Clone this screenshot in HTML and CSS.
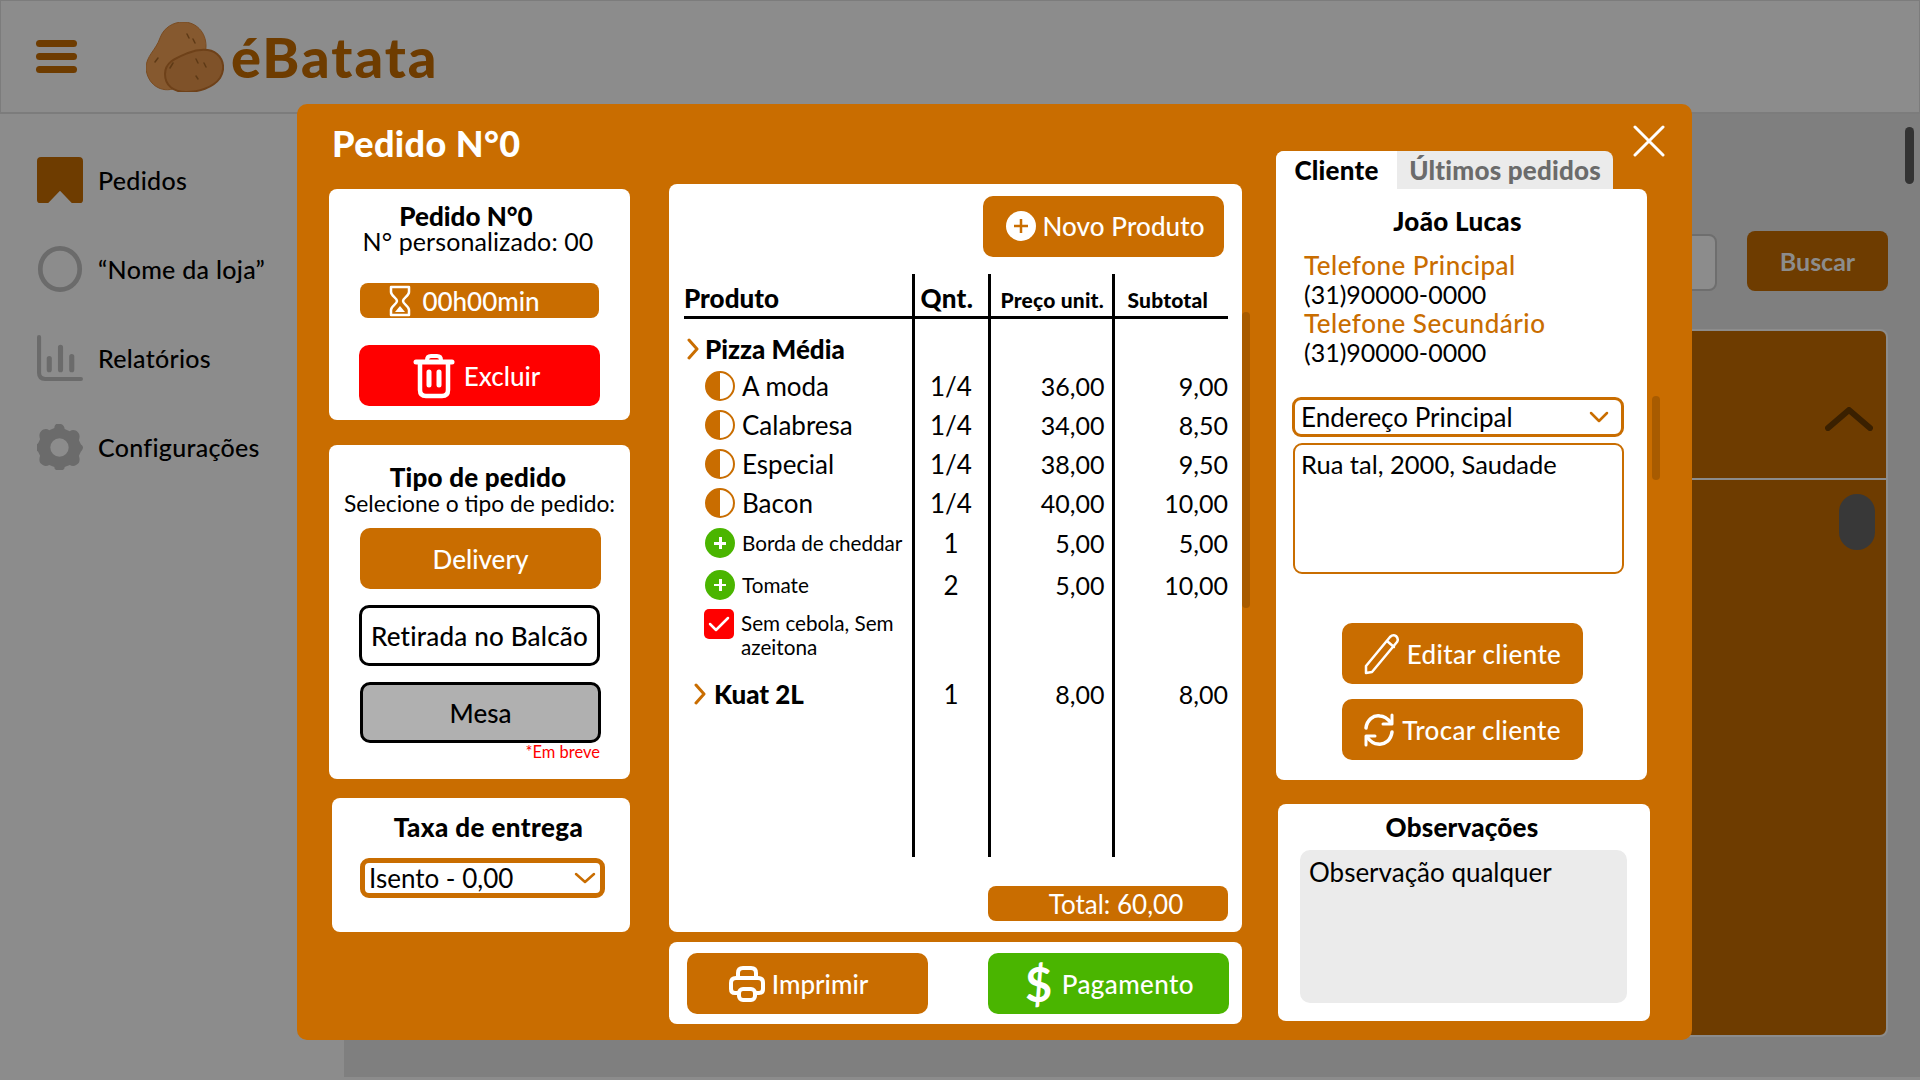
FILE: index.html
```html
<!DOCTYPE html>
<html lang="pt-BR">
<head>
    <meta charset="UTF-8">
    <title>éBatata - Pedidos</title>
    <link rel="stylesheet" href="styles.css">
</head>
<body>
    <header class="topbar">
        <div class="hamburger"><span></span><span></span><span></span></div>
        <svg class="logo-icon" viewBox="0 0 78 70">
            <path d="M0 46C0 34 10 28 14 16C18 5 28 0 37 0C50 0 60 10 60 24C60 40 45 60 30 66C15 72 1 62 0 46Z" fill="#86592f" stroke="#7a4c22" stroke-width="1"/>
            <path d="M19 52C19 40 30 36 42 31C52 27 64 26 71 32C78 38 79 48 74 56C67 66 52 70 40 70C28 70 19 64 19 52Z" fill="#7f5229" stroke="#6e4119" stroke-width="2"/>
            <path d="M41 12l2 4M47 17l2 4M12 36l-3 4M27 41l-3 5M50 37l2 4M58 41l2 4M50 54l2 3" stroke="#5e3a16" stroke-width="1.500" fill="none" stroke-linecap="round"/>
        </svg>
        <span class="logo-text">éBatata</span>
    </header>

    <div class="app-body">
        <nav class="sidebar">
            <a class="nav-item">
                <svg class="nav-icon" viewBox="0 0 45 45"><path d="M0 4Q0 0 4 0H41Q45 0 45 4V42Q45 45 42 45H34L22.500 33L11 45H3Q0 45 0 42Z" fill="#6e3c00"/></svg>
                Pedidos
            </a>
            <a class="nav-item">
                <svg class="nav-icon" viewBox="0 0 47 49"><ellipse cx="23.500" cy="24.500" rx="21" ry="22" fill="none" stroke="#6b6b6b" stroke-width="5"/></svg>
                “Nome da loja”
            </a>
            <a class="nav-item">
                <svg class="nav-icon" viewBox="0 0 45 45"><g fill="none" stroke="#6b6b6b" stroke-linecap="round"><path d="M2 2V37Q2 43 8 43H43" stroke-width="4"/><path d="M12 23V34M23 12V34M34 21V34" stroke-width="5"/></g></svg>
                Relatórios
            </a>
            <a class="nav-item">
                <svg class="nav-icon" viewBox="0 0 45 45"><path d="M22 0c3 0 5 2 5 5l5 2c3-2 6-1 8 1s2 5 1 8l2 4c0 0 2 1 2 3s-2 4-2 4l-2 4c1 3 1 6-1 8s-5 3-8 1l-5 2c0 3-2 3-5 3s-5 0-5-3l-5-2c-3 2-6 1-8-1s-2-5-1-8l-2-4c-2-1-3-2-3-4s1-3 3-4l2-4c-1-3-1-6 1-8s5-3 8-1l5-2c0-3 2-5 5-5Zm0 14a9 9 0 1 0 0 18a9 9 0 0 0 0-18Z" fill="#6b6b6b" fill-rule="evenodd"/></svg>
                Configurações
            </a>
        </nav>
        <main class="content">
            <div class="search-row">
                <div class="search-input"></div>
                <div class="search-btn">Buscar</div>
                <div class="page-scroll"></div>
            </div>
            <section class="orders-panel">
                <div class="panel-head">
                    <svg class="panel-chevron" viewBox="0 0 48 24"><path d="M3 21L24 3L45 21" fill="none" stroke="#3a2000" stroke-width="6" stroke-linecap="round" stroke-linejoin="round"/></svg>
                </div>
                <div class="panel-pill"></div>
            </section>
        </main>
    </div>

    <div class="modal">
        <svg class="modal-close" viewBox="0 0 32 32"><path d="M2 2L30 30M30 2L2 30" stroke="#fff" stroke-width="3" stroke-linecap="round"/></svg>

        <div class="col-left">
            <h1 class="modal-title">Pedido N°0</h1>

            <div class="card card-order">
                <h2 class="order-name">Pedido N°0</h2>
                <p class="order-sub">N° personalizado: 00</p>
                <div class="timer">
                    <svg width="24" height="32" viewBox="0 0 24 32"><path d="M3 2H21V7C21 11 15 13 15 16C15 19 21 21 21 25V30H3V25C3 21 9 19 9 16C9 13 3 11 3 7Z" fill="none" stroke="#fff" stroke-width="2.500" stroke-linejoin="round"/><path d="M12 21L17 27H7Z" fill="#fff"/></svg>
                    00h00min
                </div>
                <div class="btn btn-red">
                    <svg width="42" height="46" viewBox="0 0 42 44"><g fill="none" stroke="#fff" stroke-linecap="round"><path d="M3 8H39" stroke-width="5"/><path d="M14 6Q14 2 18 2H24Q28 2 28 6" stroke-width="4"/><path d="M7 9V36Q7 42 13 42H29Q35 42 35 36V9" stroke-width="4.500"/><path d="M16 18V31M26 18V31" stroke-width="5"/></g></svg>
                    Excluir
                </div>
            </div>

            <div class="card card-type">
                <h2 class="type-title">Tipo de pedido</h2>
                <p class="type-sub">Selecione o tipo de pedido:</p>
                <div class="btn btn-orange type-btn">Delivery</div>
                <div class="btn btn-outline type-btn">Retirada no Balcão</div>
                <div class="btn btn-disabled type-btn">Mesa</div>
                <p class="soon">*Em breve</p>
            </div>

            <div class="card card-fee">
                <h2 class="fee-title">Taxa de entrega</h2>
                <div class="fake-select fee-select">
                    Isento - 0,00
                    <svg class="select-arrow" width="22" height="12" viewBox="0 0 22 12"><path d="M2 2L11 10L20 2" fill="none" stroke="#c96d00" stroke-width="2.500" stroke-linecap="round" stroke-linejoin="round"/></svg>
                </div>
            </div>
        </div>

        <div class="col-mid">
            <div class="card card-items">
                <div class="btn btn-orange btn-new">
                    <svg width="30" height="30" viewBox="0 0 30 30"><circle cx="15" cy="15" r="15" fill="#fff"/><path d="M15 8V22M8 15H22" stroke="#c96d00" stroke-width="2.500"/></svg>
                    Novo Produto
                </div>
                <table class="items">
                    <colgroup>
                        <col class="c-prod"><col class="c-qty"><col class="c-price"><col class="c-sub">
                    </colgroup>
                    <tr class="head">
                        <th class="th-prod">Produto</th>
                        <th class="th-qty">Qnt.</th>
                        <th class="th-small">Preço unit.</th>
                        <th class="th-small th-sub">Subtotal</th>
                    </tr>
                    <tr class="r-main r-first">
                        <td><div class="prod-main"><svg class="chev" width="12" height="24" viewBox="0 0 12 22"><path d="M2 2L10 11L2 20" fill="none" stroke="#c96d00" stroke-width="3" stroke-linecap="round" stroke-linejoin="round"/></svg>Pizza Média</div></td>
                        <td></td><td></td><td></td>
                    </tr>
                    <tr class="r-39">
                        <td><div class="prod"><span class="half"></span>A moda</div></td>
                        <td class="qty">1/4</td><td class="num">36,00</td><td class="num">9,00</td>
                    </tr>
                    <tr class="r-39">
                        <td><div class="prod"><span class="half"></span>Calabresa</div></td>
                        <td class="qty">1/4</td><td class="num">34,00</td><td class="num">8,50</td>
                    </tr>
                    <tr class="r-39">
                        <td><div class="prod"><span class="half"></span>Especial</div></td>
                        <td class="qty">1/4</td><td class="num">38,00</td><td class="num">9,50</td>
                    </tr>
                    <tr class="r-39">
                        <td><div class="prod"><span class="half"></span>Bacon</div></td>
                        <td class="qty">1/4</td><td class="num">40,00</td><td class="num">10,00</td>
                    </tr>
                    <tr class="r-42">
                        <td><div class="prod prod-small"><span class="plus"></span>Borda de cheddar</div></td>
                        <td class="qty">1</td><td class="num">5,00</td><td class="num">5,00</td>
                    </tr>
                    <tr class="r-41">
                        <td><div class="prod prod-small"><span class="plus"></span>Tomate</div></td>
                        <td class="qty">2</td><td class="num">5,00</td><td class="num">10,00</td>
                    </tr>
                    <tr class="r-note">
                        <td><div class="prod prod-small prod-note"><span class="check"><svg width="22" height="18" viewBox="0 0 22 18"><path d="M2 9L8 15L20 3" fill="none" stroke="#fff" stroke-width="2.500" stroke-linecap="round" stroke-linejoin="round"/></svg></span><span class="note-text">Sem cebola, Sem azeitona</span></div></td>
                        <td></td><td></td><td></td>
                    </tr>
                    <tr class="r-main r-kuat">
                        <td><div class="prod-main prod-kuat"><svg class="chev" width="12" height="24" viewBox="0 0 12 22"><path d="M2 2L10 11L2 20" fill="none" stroke="#c96d00" stroke-width="3" stroke-linecap="round" stroke-linejoin="round"/></svg>Kuat 2L</div></td>
                        <td class="qty">1</td><td class="num">8,00</td><td class="num">8,00</td>
                    </tr>
                    <tr class="r-fill"><td></td><td></td><td></td><td></td></tr>
                </table>
                <div class="total">Total: 60,00</div>
                <div class="scroll-thumb thumb-items"></div>
            </div>
            <div class="card card-actions">
                <div class="btn btn-orange btn-action btn-print">
                    <svg width="36" height="36" viewBox="0 0 36 36"><g fill="none" stroke="#fff" stroke-width="4" stroke-linejoin="round"><path d="M9 13V7Q9 2 14 2H22Q27 2 27 7V13"/><path d="M9 27H6Q2 27 2 23V17Q2 12 7 12H29Q34 12 34 17V23Q34 27 30 27H27"/><rect x="10" y="23" width="16" height="11" rx="4"/></g></svg>
                    Imprimir
                </div>
                <div class="btn btn-green btn-action btn-pay">
                    <span class="dollar">$</span>
                    Pagamento
                </div>
            </div>
        </div>

        <div class="col-right">
            <div class="tabs">
                <div class="tab tab-active">Cliente</div>
                <div class="tab">Últimos pedidos</div>
            </div>
            <div class="card card-client">
                <h2 class="client-name">João Lucas</h2>
                <div class="phones">
                    <div class="phone-label">Telefone Principal</div>
                    <div class="phone-num">(31)90000-0000</div>
                    <div class="phone-label">Telefone Secundário</div>
                    <div class="phone-num">(31)90000-0000</div>
                </div>
                <div class="fake-select address-select">
                    Endereço Principal
                    <svg class="select-arrow" width="20" height="12" viewBox="0 0 20 12"><path d="M2 2L10 10L18 2" fill="none" stroke="#c96d00" stroke-width="2.500" stroke-linecap="round" stroke-linejoin="round"/></svg>
                </div>
                <div class="address-box">Rua tal, 2000, Saudade</div>
                <div class="btn btn-orange btn-client btn-edit">
                    <svg width="36" height="42" viewBox="0 0 36 42"><g fill="none" stroke="#fff" stroke-width="2.500" stroke-linejoin="round" stroke-linecap="round"><path d="M2 33L26 4Q29 1 32 3Q35 6 33 9L8 39L2 40Z"/><path d="M23 8L30 14"/></g></svg>
                    Editar cliente
                </div>
                <div class="btn btn-orange btn-client btn-swap">
                    <svg width="32" height="36" viewBox="0 0 32 36"><g fill="none" stroke="#fff" stroke-width="3.500" stroke-linecap="round" stroke-linejoin="round"><path d="M3 16C4 8 10 3 17 4C22 4 25 7 28 11"/><path d="M29 3V12H20" stroke-width="3"/><path d="M29 20C28 28 22 33 15 32C10 32 7 29 4 25"/><path d="M3 33V24H12" stroke-width="3"/></g></svg>
                    Trocar cliente
                </div>
                <div class="scroll-thumb thumb-client"></div>
            </div>
            <div class="card card-notes">
                <h2 class="notes-title">Observações</h2>
                <div class="notes-box">Observação qualquer</div>
            </div>
        </div>
    </div>
</body>
</html>
```

FILE: styles.css
```css
* {
    box-sizing: border-box;
}
html, body {
    height: 100%;
}
body {
    margin: 0;
    position: relative;
    height: 1080px;
    overflow: hidden;
    background-color: #8c8c8c;
    font-family: "Lato", "Noto Sans", sans-serif;
    font-size: 25px;
    color: #000;
}
h1, h2, p {
    margin: 0;
}

/* page behind the modal */
.topbar {
    height: 114px;
    display: flex;
    align-items: center;
    padding-left: 35px;
    border: 1px solid #7c7c7c;
    border-width: 1px 1px 2px 1px;
}
.hamburger {
    width: 41px;
    display: flex;
    flex-direction: column;
    gap: 6px;
    margin-right: 69px;
}
.hamburger span {
    height: 7px;
    border-radius: 4px;
    background-color: #6e3c00;
}
.logo-icon {
    width: 78px;
    height: 70px;
    margin-right: 7px;
}
.logo-text {
    font-size: 56px;
    font-weight: 900;
    color: #6e3c00;
    letter-spacing: 2px;
}
.app-body {
    display: flex;
    height: 963px;
}
.sidebar {
    width: 344px;
    padding: 43px 0 0 37px;
    display: flex;
    flex-direction: column;
    gap: 43px;
}
.nav-item {
    display: flex;
    align-items: center;
    gap: 15px;
    height: 46px;
    font-size: 25px;
    font-weight: 500;
    letter-spacing: 0.3px;
}
.nav-icon {
    width: 46px;
    height: 46px;
}
.content {
    flex: 1;
    background-color: #7f7f7f;
    padding: 117px 32px 0 0;
    position: relative;
}
.search-row {
    display: flex;
    justify-content: flex-end;
    gap: 30px;
    height: 60px;
}
.search-input {
    width: 300px;
    height: 57px;
    margin-top: 3px;
    background-color: #8c8c8c;
    border: 2px solid #6e6e6e;
    border-radius: 8px;
}
.search-btn {
    width: 141px;
    display: flex;
    align-items: center;
    justify-content: center;
    background-color: #6e3c00;
    border-radius: 8px;
    color: #8c8c8c;
    font-weight: 700;
}
.page-scroll {
    position: absolute;
    top: 13px;
    right: 6px;
    width: 9px;
    height: 57px;
    border-radius: 5px;
    background-color: #333;
}
.orders-panel {
    position: relative;
    margin: 38px 0 0 auto;
    width: 600px;
    height: 708px;
    background-color: #6e3c00;
    border: 2px solid #8c8c8c;
    border-radius: 8px;
}
.panel-head {
    height: 149px;
    border-bottom: 2px solid #8c8c8c;
    display: flex;
    justify-content: flex-end;
    align-items: center;
    padding: 28px 13px 0 0;
}
.panel-chevron {
    width: 48px;
    height: 24px;
}
.panel-pill {
    position: absolute;
    top: 163px;
    right: 11px;
    width: 36px;
    height: 56px;
    border-radius: 18px;
    background-color: #383838;
}

/* modal */
.modal {
    position: absolute;
    top: 104px;
    left: 297px;
    width: 1395px;
    height: 936px;
    display: flex;
    background-color: #c96d00;
    border-radius: 10px;
    padding-left: 32px;
}
.modal-close {
    position: absolute;
    top: 21px;
    right: 27px;
    width: 32px;
    height: 32px;
}
.card {
    background-color: #fff;
    border-radius: 8px;
}
.col-left {
    width: 302px;
}
.col-mid {
    width: 573px;
    margin: 80px 0 0 38px;
}
.col-right {
    width: 374px;
    margin: 47px 0 0 34px;
}
.modal-title {
    height: 85px;
    padding: 16px 0 0 3px;
    font-size: 36px;
    line-height: 46px;
    color: #fff;
    font-weight: 900;
    letter-spacing: 0.4px;
}
.btn {
    display: flex;
    align-items: center;
    justify-content: center;
    height: 61px;
    border-radius: 10px;
    font-size: 26px;
    font-weight: 500;
}
.btn-orange {
    background-color: #c96d00;
    color: #fff;
}
.btn-red {
    background-color: #ff0000;
    color: #fff;
}
.btn-green {
    background-color: #4ab500;
    color: #fff;
}
.btn-outline {
    background-color: #fff;
    border: 3px solid #000;
}
.btn-disabled {
    background-color: #b0b0b0;
    border: 3px solid #000;
}

/* left column */
.card-order {
    width: 301px;
    height: 231px;
    padding: 14px 0 0 31px;
    text-align: center;
}
.order-name {
    font-size: 26px;
    line-height: 26px;
    padding-right: 58px;
    font-weight: 900;
}
.order-sub {
    font-size: 25px;
    line-height: 26px;
    margin-top: -1px;
    padding-right: 34px;
    letter-spacing: 0.1px;
}
.timer {
    width: 239px;
    height: 35px;
    margin-top: 29px;
    border-radius: 8px;
    background-color: #c96d00;
    color: #fff;
    font-size: 26px;
    font-weight: 500;
    display: flex;
    align-items: center;
    justify-content: center;
    gap: 10px;
    padding-right: 31px;
}
.card-order .btn-red {
    width: 241px;
    margin: 27px 0 0 -1px;
    gap: 9px;
    padding-right: 6px;
}
.card-type {
    width: 301px;
    height: 334px;
    margin-top: 25px;
    padding: 19px 0 0 31px;
    text-align: center;
}
.type-title {
    font-size: 26px;
    line-height: 26px;
    padding-right: 34px;
    font-weight: 900;
    letter-spacing: 0.2px;
}
.type-sub {
    font-size: 22.800px;
    line-height: 26px;
    width: 270px;
    margin-left: -16px;
    white-space: nowrap;
}
.type-btn {
    width: 241px;
    margin-top: 16px;
}
.btn-orange.type-btn {
    margin-top: 12px;
}
.btn-outline.type-btn {
    margin-left: -1px;
    font-weight: 500;
    letter-spacing: 0.2px;
}
.soon {
    width: 240px;
    text-align: right;
    font-size: 16.500px;
    line-height: 18px;
    color: #ff0000;
}
.card-fee {
    width: 298px;
    height: 134px;
    margin: 19px 0 0 3px;
    padding: 16px 0 0 28px;
}
.fee-title {
    width: 257px;
    text-align: center;
    font-size: 26px;
    line-height: 26px;
    font-weight: 900;
    letter-spacing: 0.4px;
}
.fake-select {
    display: flex;
    align-items: center;
    justify-content: space-between;
    border-radius: 9px;
    font-size: 26px;
    background-color: #fff;
}
.fee-select {
    width: 245px;
    height: 40px;
    margin-top: 18px;
    border: 5px solid #c96d00;
    padding: 0 4px 0 4px;
}

/* order items */
.card-items {
    position: relative;
    height: 748px;
    padding-top: 12px;
}
.btn-new {
    width: 241px;
    margin: 0 18px 0 auto;
    gap: 6px;
    padding: 0 0 2px 4px;
    font-size: 26px;
    letter-spacing: 0.1px;
}
.items {
    width: 544px;
    height: 583px;
    margin: 17px 0 0 15px;
    border-collapse: collapse;
    table-layout: fixed;
    font-size: 26px;
}
.c-prod { width: 229px; }
.c-qty { width: 76px; }
.c-price { width: 124px; }
.items th, .items td {
    padding: 0;
    border-right: 3px solid #000;
}
.items th:last-child, .items td:last-child {
    border-right: none;
}
.items th {
    border-bottom: 3px solid #000;
    height: 43px;
    text-align: left;
    font-weight: 900;
    vertical-align: bottom;
}
.th-prod {
    font-size: 26px;
    line-height: 36px;
}
.th-qty {
    font-size: 26px;
    line-height: 36px;
    padding-left: 6px !important;
    letter-spacing: 0.3px;
}
.th-small {
    font-size: 21px;
    line-height: 33px;
    padding-left: 10px !important;
    letter-spacing: 0.2px;
}
.th-sub {
    padding-left: 13px !important;
}
.r-first { height: 49px; }
.r-first td { padding-top: 13px; }
.r-39 { height: 39px; }
.r-41 { height: 41px; }
.r-42 { height: 42px; }
.r-note { height: 69px; }
.r-note td { vertical-align: top; padding-top: 4px; }
.r-kuat { height: 40px; }
.qty {
    text-align: center;
}
.num {
    text-align: right;
    padding-right: 7px !important;
    font-size: 25px;
}
.items td.num:last-child {
    padding-right: 0 !important;
}
.prod-main {
    display: flex;
    align-items: center;
    gap: 6px;
    padding-left: 3px;
    font-weight: 900;
    font-size: 26px;
}
.prod-kuat {
    padding-left: 10px;
    gap: 8px;
}
.chev {
    flex-shrink: 0;
}
.prod {
    display: flex;
    align-items: center;
    gap: 7px;
    padding-left: 21px;
    white-space: nowrap;
}
.prod-small {
    font-size: 20.700px;
}
.prod-note {
    align-items: flex-start;
    white-space: normal;
    line-height: 24px;
}
.note-text {
    padding-top: 2px;
}
.half {
    flex-shrink: 0;
    width: 30px;
    height: 30px;
    border-radius: 50%;
    border: 2px solid #c96d00;
    background: linear-gradient(90deg, #c96d00 50%, #fff 50%);
}
.plus {
    flex-shrink: 0;
    position: relative;
    width: 30px;
    height: 30px;
    border-radius: 50%;
    background-color: #4ab500;
}
.plus::before, .plus::after {
    content: "";
    position: absolute;
    background-color: #fff;
}
.plus::before {
    left: 9px;
    top: 14px;
    width: 12px;
    height: 2.5px;
}
.plus::after {
    left: 14px;
    top: 9px;
    width: 2.5px;
    height: 12px;
}
.check {
    flex-shrink: 0;
    width: 30px;
    height: 30px;
    margin-left: -1px;
    border-radius: 5px;
    background-color: #ff0000;
    display: flex;
    align-items: center;
    justify-content: center;
}
.total {
    width: 240px;
    height: 35px;
    margin: 29px 0 0 319px;
    padding-left: 16px;
    border-radius: 8px;
    background-color: #c96d00;
    color: #fff;
    font-size: 26px;
    display: flex;
    align-items: center;
    justify-content: center;
}
.scroll-thumb {
    position: absolute;
    width: 8px;
    border-radius: 4px;
    background-color: #a85b00;
}
.thumb-items {
    top: 128px;
    right: -8px;
    height: 296px;
}
.card-actions {
    height: 82px;
    margin-top: 10px;
    padding: 11px 13px 0 18px;
    display: flex;
    justify-content: space-between;
}
.btn-action {
    width: 241px;
    gap: 7px;
}
.btn-print {
    padding-right: 18px;
}
.btn-pay {
    padding-left: 2px;
    gap: 9px;
    letter-spacing: 0.4px;
}
.dollar {
    font-size: 47px;
    font-weight: 700;
    line-height: 40px;
}

/* right column */
.tabs {
    display: flex;
    width: 337px;
    height: 38px;
    border-radius: 8px 8px 0 0;
    overflow: hidden;
    background-color: #ebebeb;
}
.tab {
    flex: 1;
    display: flex;
    align-items: center;
    justify-content: center;
    font-size: 26px;
    font-weight: 900;
    color: #6b6b6b;
    letter-spacing: 0.2px;
}
.tab-active {
    flex: none;
    width: 121px;
    background-color: #fff;
    color: #000;
}
.card-client {
    position: relative;
    width: 371px;
    height: 591px;
    border-top-left-radius: 0;
    padding-top: 19px;
}
.client-name {
    text-align: center;
    font-size: 26px;
    line-height: 26px;
    padding-right: 8px;
    font-weight: 900;
    letter-spacing: 0.3px;
}
.phones {
    margin: 17px 0 0 28px;
    font-size: 26px;
    line-height: 29px;
}
.phone-label {
    color: #c96d00;
    font-weight: 500;
    letter-spacing: 0.5px;
}
.phone-num {
    font-size: 25px;
}
.address-select {
    width: 332px;
    height: 40px;
    margin: 30px 0 0 16px;
    border: 3px solid #c96d00;
    padding: 0 12px 0 6px;
}
.address-box {
    width: 331px;
    height: 131px;
    margin: 6px 0 0 17px;
    border: 2px solid #c96d00;
    border-radius: 9px;
    padding: 4px 6px;
    font-size: 25.500px;
}
.btn-client {
    width: 241px;
    margin-left: 66px;
    letter-spacing: 0.35px;
}
.btn-edit {
    margin-top: 49px;
    gap: 7px;
    padding-right: 0;
}
.btn-swap {
    margin-top: 15px;
    gap: 7px;
    padding-right: 1px;
}
.thumb-client {
    top: 207px;
    right: -13px;
    height: 84px;
}
.card-notes {
    width: 372px;
    height: 217px;
    margin: 24px 0 0 2px;
    padding-top: 10px;
}
.notes-title {
    text-align: center;
    font-size: 26px;
    line-height: 26px;
    font-weight: 900;
    letter-spacing: 0.2px;
    padding-right: 4px;
}
.notes-box {
    width: 327px;
    height: 153px;
    margin: 10px 0 0 22px;
    padding: 6px 9px;
    border-radius: 10px;
    background-color: #ebebeb;
    font-size: 26px;
}
```
